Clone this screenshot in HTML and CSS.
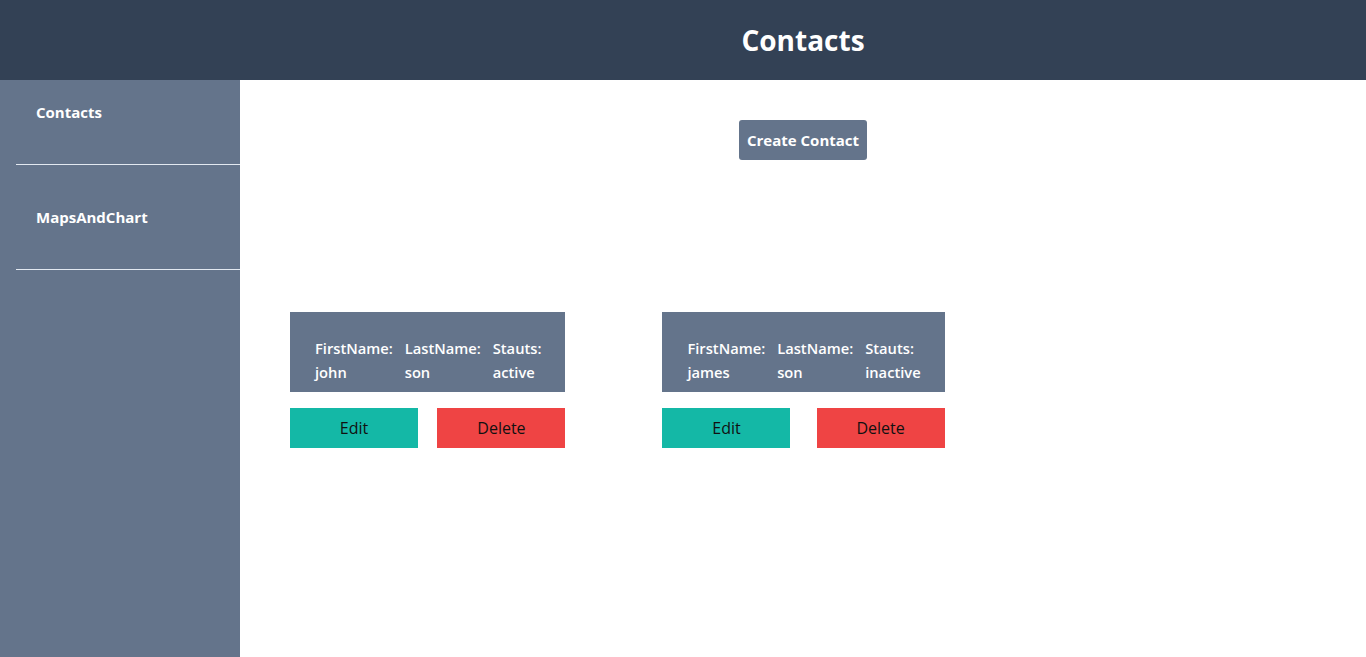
FILE: index.html
```html
<!DOCTYPE html>
<html lang="en">
<head>
<meta charset="utf-8">
<title>Contacts</title>
<link rel="stylesheet" href="styles.css">
</head>
<body>
<header class="header"><h1 class="title">Contacts</h1></header>
<div class="layout">
  <nav class="sidebar">
    <div class="nav-item">Contacts</div>
    <div class="nav-item">MapsAndChart</div>
  </nav>
  <main class="main">
    <div class="create-row"><button class="create-btn">Create Contact</button></div>
    <div class="cards">
      <div class="card">
        <div class="info">
          <div class="field"><div>FirstName:</div><div>john</div></div>
          <div class="field"><div>LastName:</div><div>son</div></div>
          <div class="field"><div>Stauts:</div><div>active</div></div>
        </div>
        <div class="actions">
          <button class="btn btn-edit">Edit</button>
          <button class="btn btn-delete">Delete</button>
        </div>
      </div>
      <div class="card">
        <div class="info">
          <div class="field"><div>FirstName:</div><div>james</div></div>
          <div class="field"><div>LastName:</div><div>son</div></div>
          <div class="field"><div>Stauts:</div><div>inactive</div></div>
        </div>
        <div class="actions">
          <button class="btn btn-edit">Edit</button>
          <button class="btn btn-delete">Delete</button>
        </div>
      </div>
    </div>
  </main>
</div>
</body>
</html>
```
FILE: styles.css
```css
* { box-sizing: border-box; }
html, body { margin: 0; padding: 0; }
body {
  font-family: "Open Sans", "Noto Sans", sans-serif;
  font-size: 15px;
  line-height: 24px;
  background: #ffffff;
  overflow: hidden;
}
.header {
  height: 80px;
  background: #334155;
  display: flex;
  align-items: center;
  justify-content: center;
  padding-left: 240px;
}
.title {
  margin: 0;
  color: #ffffff;
  font-size: 28px;
  font-weight: 700;
  line-height: 36px;
}
.layout {
  display: flex;
  height: 577px;
}
.sidebar {
  width: 240px;
  flex-shrink: 0;
  background: #64748b;
  display: flex;
  flex-direction: column;
  gap: 20px;
}
.nav-item {
  margin-left: 16px;
  padding: 20px 20px 40px;
  border-bottom: 1px solid #e2e8f0;
  color: #ffffff;
  font-weight: 700;
}
.main {
  flex: 1;
}
.create-row {
  display: flex;
  justify-content: center;
  padding-top: 40px;
}
.create-btn {
  width: 128px;
  height: 40px;
  border: none;
  border-radius: 3px;
  background: #64748b;
  color: #ffffff;
  font-family: inherit;
  font-size: 15px;
  font-weight: 700;
  padding: 0;
}
.cards {
  display: flex;
  align-items: flex-start;
  gap: 97px;
  padding-left: 50px;
  margin-top: 152px;
}
.card {
  display: flex;
  flex-direction: column;
  gap: 16px;
}
.info {
  background: #64748b;
  color: #ffffff;
  font-size: 14.7px;
  font-weight: 600;
  display: flex;
  gap: 12px;
  padding: 24px 24px 8px 25px;
}
.actions {
  display: flex;
  justify-content: space-between;
}
.btn {
  width: 128px;
  height: 40px;
  border: none;
  padding: 0;
  font-family: inherit;
  font-size: 16px;
  color: #111111;
}
.btn-edit { background: #14b8a6; }
.btn-delete { background: #ef4444; }
```
